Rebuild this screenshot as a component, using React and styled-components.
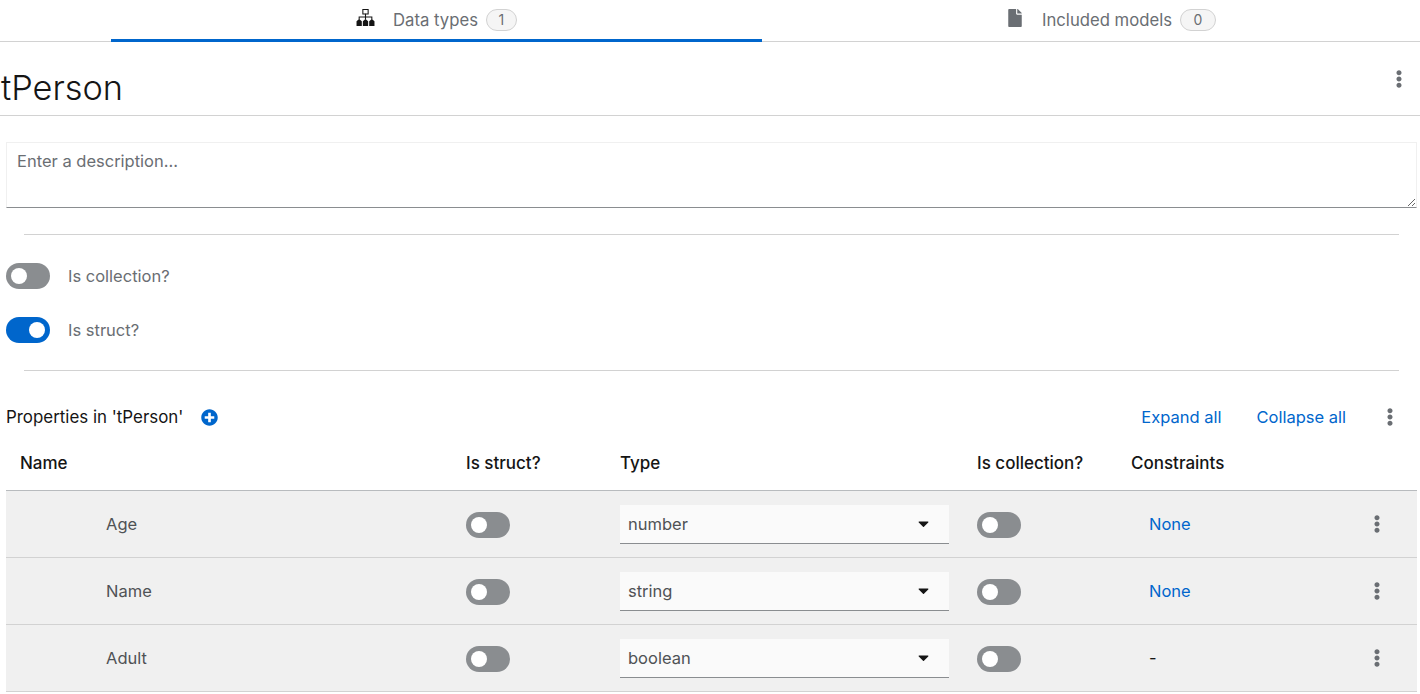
import React from "react";
import styled, { createGlobalStyle } from "styled-components";
import { FaFile, FaEllipsisV, FaPlusCircle, FaCaretDown } from "react-icons/fa";

const Global = createGlobalStyle`
  html, body { margin: 0; padding: 0; background: #fff; }
  body { font-family: Inter, "Open Sans", "Liberation Sans", sans-serif; font-size: 16.5px; color: #151515; overflow: hidden; }
  * { box-sizing: border-box; }
`;

const Page = styled.div`
  width: 1420px;
  height: 694px;
  overflow: hidden;
`;

const TabBar = styled.nav`
  display: grid;
  grid-template-columns: 111px 651px 1fr;
  height: 42px;
  border-bottom: 1px solid #d2d2d2;
`;

const Tab = styled.div`
  display: flex;
  align-items: center;
  justify-content: center;
  gap: 15px;
  height: 42px;
  padding-bottom: ${(p) => (p.$active ? "0" : "3px")};
  padding-left: ${(p) => (p.$active ? "0" : "40px")};
  color: ${(p) => (p.$active ? "#151515" : "#6a6e73")};
  border-bottom: ${(p) => (p.$active ? "3px solid #06c" : "none")};
`;

const TabIcon = styled.span`
  display: inline-flex;
  margin-right: 3px;
  margin-top: -4px;
  color: ${(p) => (p.$active ? "#151515" : "#6a6e73")};
`;

const TabLabel = styled.span`
  font-size: 16.7px;
  color: #6a6e73;
`;

const Badge = styled.span`
  display: inline-flex;
  align-items: center;
  justify-content: center;
  min-width: ${(p) => p.$w}px;
  height: 22px;
  margin-left: -7px;
  font-size: 14px;
  color: #6a6e73;
  background: #f5f5f5;
  border: 1px solid #d2d2d2;
  border-radius: 30px;
`;

const TitleRow = styled.header`
  display: flex;
  align-items: center;
  justify-content: space-between;
  height: 74px;
  padding: 0 12px 0 1px;
  border-bottom: 1px solid #d2d2d2;
`;

const Title = styled.h1`
  margin: 18px 0 0;
  font-size: 34.3px;
  font-weight: 300;
  color: #151515;
`;

const Kebab = styled.span`
  display: inline-flex;
  font-size: 18px;
  color: #6a6e73;
`;

const Body = styled.main`
  padding: 26px 3px 0 6px;
`;

const Description = styled.textarea`
  display: block;
  width: 100%;
  height: 66px;
  padding: 8px 10px;
  font: inherit;
  background: #fff;
  border: 1px solid #f0f0f0;
  border-bottom-color: #8a8d90;
  border-radius: 0;
  outline: none;
  &::placeholder { color: #6a6e73; opacity: 1; }
`;

const Divider = styled.hr`
  margin: ${(p) => p.$top}px 18px ${(p) => p.$bottom}px 18px;
  border: 0;
  border-top: 1px solid #d2d2d2;
`;

const SwitchTrack = styled.span`
  position: relative;
  display: block;
  flex: none;
  width: 44px;
  height: 26px;
  background: ${(p) => (p.$on ? "#06c" : "#8a8d90")};
  border-radius: 13px;
  &::after {
    content: "";
    position: absolute;
    top: 5px;
    left: ${(p) => (p.$on ? "23px" : "5px")};
    width: 16px;
    height: 16px;
    background: #fff;
    border-radius: 50%;
  }
`;

const RowSwitch = styled(SwitchTrack)`
  margin-top: 2px;
`;

const SwitchRow = styled.label`
  display: flex;
  align-items: center;
  gap: 18px;
  height: 26px;
  margin-bottom: ${(p) => p.$mb || 0}px;
  color: #6a6e73;
`;

const PropsHeader = styled.div`
  display: flex;
  align-items: center;
  height: 30px;
  margin-top: 31px;
  padding-right: 18px;
`;

const PropsTitle = styled.span`
  font-size: 16.9px;
  color: #151515;
`;

const AddIcon = styled.span`
  display: inline-flex;
  margin-left: 18px;
  font-size: 17px;
  color: #06c;
`;

const LinkGroup = styled.div`
  display: flex;
  align-items: center;
  gap: 35px;
  margin-left: auto;
`;

const LinkText = styled.a`
  color: #06c;
`;

const Table = styled.div`
  width: 1411px;
`;

const cols = "grid-template-columns: 460px 154px 357px 154px 1fr 49px;";

const HeadRow = styled.div`
  display: grid;
  ${cols}
  align-items: center;
  height: 59px;
  padding-top: 4px;
  font-size: 17px;
  font-weight: 500;
  color: #151515;
  border-bottom: 1px solid #b8bbbe;
`;

const HeadCell = styled.div`
  padding-left: ${(p) => (p.$first ? "14px" : "0")};
`;

const Row = styled.div`
  display: grid;
  ${cols}
  align-items: center;
  height: 67px;
  background: #f0f0f0;
  border-bottom: 1px solid #d2d2d2;
`;

const NameCell = styled.div`
  padding-left: 100px;
  color: #4f5255;
`;

const Select = styled.div`
  display: flex;
  align-items: center;
  justify-content: space-between;
  width: 329px;
  height: 39px;
  padding: 0 17px 0 8px;
  color: #4f5255;
  background: #fafafa;
  border-bottom: 1px solid #8a8d90;
`;

const Caret = styled.span`
  display: inline-flex;
  font-size: 17px;
  margin-top: -1px;
  color: #151515;
`;

const Constraint = styled.div`
  padding-left: 18px;
  color: ${(p) => (p.$link ? "#06c" : "#151515")};
`;

const RowMenu = styled.div`
  display: flex;
  justify-content: flex-start;
  padding-left: 0;
`;

const Sitemap = () => (
  <svg width="19" height="17" viewBox="0 0 18 16" fill="currentColor">
    <path d="M6.5 .5h5v4.2h-5z" fill="none" stroke="currentColor" />
    <path d="M9 4.5v3M3 10V7.5h12V10M9 7.5V10" fill="none" stroke="currentColor" />
    <path d="M3 9.5l2.5 2V16H.5v-4.5zM9 9.5l2.5 2V16h-5v-4.5zM15 9.5l2.5 2V16h-5v-4.5z" />
  </svg>
);

const rows = [
  { name: "Age", type: "number", constraint: "None" },
  { name: "Name", type: "string", constraint: "None" },
  { name: "Adult", type: "boolean", constraint: "-" },
];

export default function App() {
  return (
    <Page>
      <Global />
      <TabBar>
        <span />
        <Tab $active>
          <TabIcon $active><Sitemap /></TabIcon>
          <TabLabel>Data types</TabLabel>
          <Badge $w={31}>1</Badge>
        </Tab>
        <Tab>
          <TabIcon><FaFile size={18} /></TabIcon>
          <TabLabel>Included models</TabLabel>
          <Badge $w={36}>0</Badge>
        </Tab>
      </TabBar>
      <TitleRow>
        <Title>tPerson</Title>
        <Kebab><FaEllipsisV /></Kebab>
      </TitleRow>
      <Body>
        <Description placeholder="Enter a description..." />
        <Divider $top={26} $bottom={28} />
        <SwitchRow $mb={28}><SwitchTrack /><span>Is collection?</span></SwitchRow>
        <SwitchRow><SwitchTrack $on /><span>Is struct?</span></SwitchRow>
        <Divider $top={27} $bottom={0} />
        <PropsHeader>
          <PropsTitle>Properties in 'tPerson'</PropsTitle>
          <AddIcon><FaPlusCircle /></AddIcon>
          <LinkGroup>
            <LinkText>Expand all</LinkText>
            <LinkText>Collapse all</LinkText>
            <Kebab><FaEllipsisV /></Kebab>
          </LinkGroup>
        </PropsHeader>
        <Table>
          <HeadRow>
            <HeadCell $first>Name</HeadCell>
            <HeadCell>Is struct?</HeadCell>
            <HeadCell>Type</HeadCell>
            <HeadCell>Is collection?</HeadCell>
            <HeadCell>Constraints</HeadCell>
            <HeadCell />
          </HeadRow>
          {rows.map((r) => (
            <Row key={r.name}>
              <NameCell>{r.name}</NameCell>
              <RowSwitch />
              <Select>
                <span>{r.type}</span>
                <Caret><FaCaretDown /></Caret>
              </Select>
              <RowSwitch />
              <Constraint $link={r.constraint === "None"}>{r.constraint}</Constraint>
              <RowMenu><Kebab><FaEllipsisV /></Kebab></RowMenu>
            </Row>
          ))}
        </Table>
      </Body>
    </Page>
  );
}
